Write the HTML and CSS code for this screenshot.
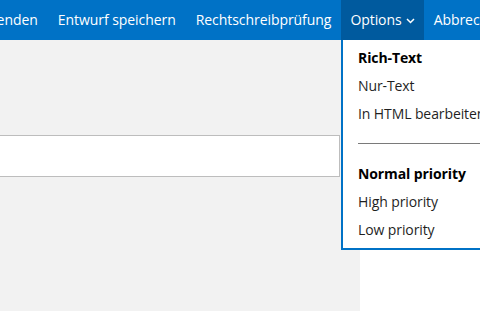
FILE: index.html
```html
<!DOCTYPE html>
<html lang="de">

<head>
    <meta charset="UTF-8">
    <title>Nachricht verfassen</title>
    <link rel="stylesheet" href="styles.css">
</head>

<body>
    <!-- 상단 명령줄 -->
    <div class="cmdbar">
        <div class="cmd">Senden</div>
        <div class="cmd">Entwurf speichern</div>
        <div class="cmd">Rechtschreibprüfung</div>
        <div class="cmd on">Options
            <svg class="chev" width="9" height="6" viewBox="0 0 9 6">
                <path d="M1 1 L4.5 4.5 L8 1" fill="none" stroke="#fff" stroke-width="1.5"/>
            </svg>
        </div>
        <div class="cmd">Abbrechen</div>
    </div>

    <!-- 본문 -->
    <div class="main">
        <div class="pane">
            <div class="field"></div>
        </div>
    </div>

    <!-- 드롭다운 메뉴 -->
    <div class="menu">
        <div class="item bold">Rich-Text</div>
        <div class="item">Nur-Text</div>
        <div class="item">In HTML bearbeiten</div>
        <div class="sep"></div>
        <div class="item bold">Normal priority</div>
        <div class="item">High priority</div>
        <div class="item">Low priority</div>
    </div>
</body>

</html>
```

FILE: styles.css
```css
* {
    box-sizing: border-box;
}

body {
    margin: 0;
    font-family: "Open Sans", "Noto Sans", sans-serif;
    font-size: 14px;
    overflow: hidden;
    height: 311px;
    position: relative;
}

/* 명령줄 */
.cmdbar {
    height: 40px;
    background: #0072c6;
    display: flex;
    white-space: nowrap;
    margin-left: -21px;
    letter-spacing: -0.06px;
}

.cmd {
    height: 40px;
    line-height: 40px;
    padding: 0 10px;
    color: #fff;
    display: flex;
    align-items: center;
}

.cmd.on {
    background: #005a9e;
    padding: 0 9px;
}

.chev {
    margin-left: 4px;
    margin-top: 2px;
}

/* 본문 */
.main {
    height: 271px;
    display: flex;
}

.pane {
    width: 360px;
    background: #f2f2f2;
    padding: 95px 20px 0 0;
}

.field {
    margin-left: -10px;
    height: 42px;
    background: #fff;
    border: 1px solid #bdbdbd;
}

/* 드롭다운 */
.menu {
    position: absolute;
    top: 40px;
    left: 341px;
    width: 200px;
    background: #fff;
    border: 2px solid #0072c6;
    border-top: none;
    padding: 4px 0 4px 15px;
    color: #1f1f1f;
    white-space: nowrap;
    letter-spacing: -0.1px;
}

.item {
    height: 28px;
    line-height: 28px;
}

.item.bold {
    font-weight: bold;
    color: #000;
}

.sep {
    height: 1px;
    background: #7a7a7a;
    margin: 15px 0 16px;
}
```
